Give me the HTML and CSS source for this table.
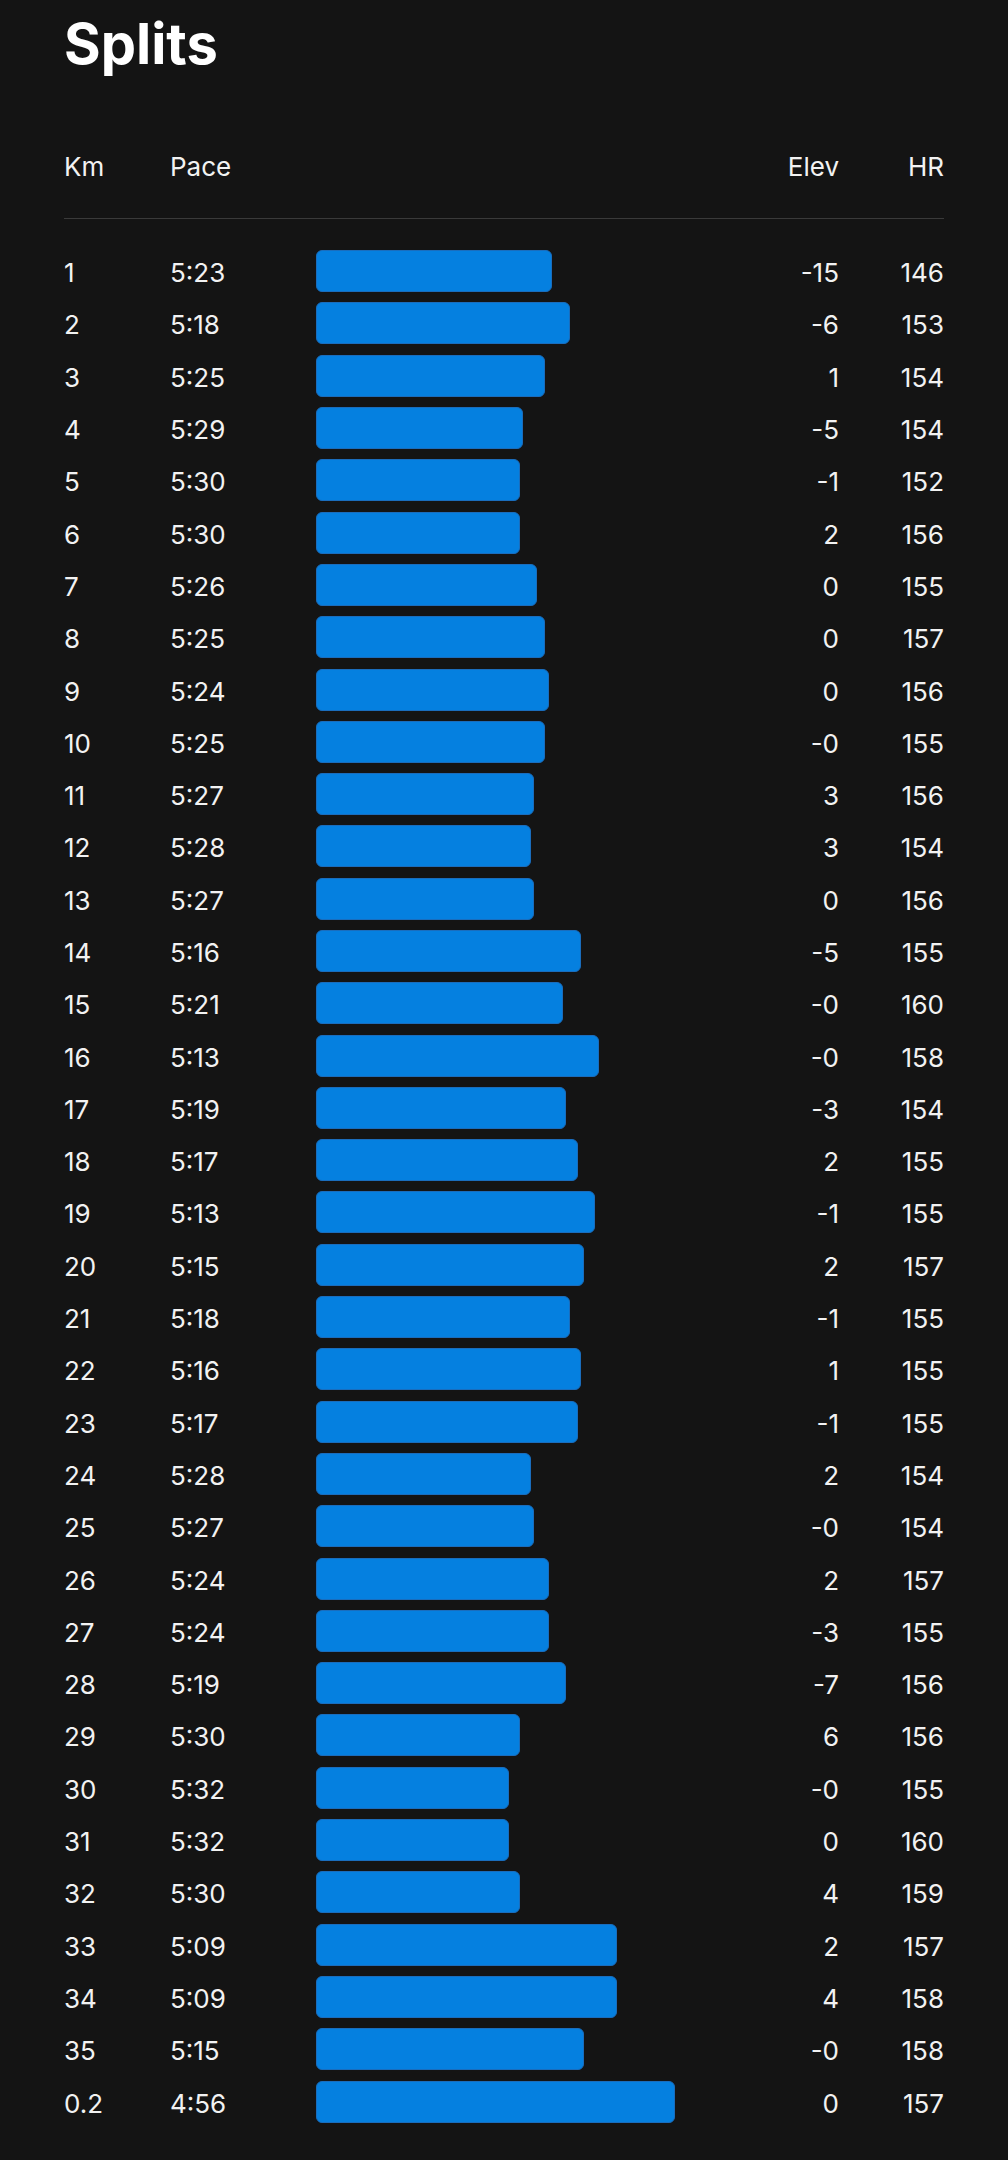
FILE: index.html
```html
<!DOCTYPE html>
<html lang="en">
<head>
    <meta charset="UTF-8">
    <meta name="viewport" content="width=device-width, initial-scale=1.0">
    <title>Splits</title>
    <link rel="stylesheet" href="styles.css">
</head>
<body>
    <div class="splits">
        <h1>Splits</h1>

        <div class="split-row split-head">
            <span>Km</span>
            <span>Pace</span>
            <span></span>
            <span class="num">Elev</span>
            <span class="num">HR</span>
        </div>

        <div class="split-list">
            <div class="split-row"><span>1</span><span>5:23</span><span class="track"><div class="bar" style="width:236px"></div></span><span class="num">-15</span><span class="num">146</span></div>
            <div class="split-row"><span>2</span><span>5:18</span><span class="track"><div class="bar" style="width:254px"></div></span><span class="num">-6</span><span class="num">153</span></div>
            <div class="split-row"><span>3</span><span>5:25</span><span class="track"><div class="bar" style="width:229px"></div></span><span class="num">1</span><span class="num">154</span></div>
            <div class="split-row"><span>4</span><span>5:29</span><span class="track"><div class="bar" style="width:207px"></div></span><span class="num">-5</span><span class="num">154</span></div>
            <div class="split-row"><span>5</span><span>5:30</span><span class="track"><div class="bar" style="width:204px"></div></span><span class="num">-1</span><span class="num">152</span></div>
            <div class="split-row"><span>6</span><span>5:30</span><span class="track"><div class="bar" style="width:204px"></div></span><span class="num">2</span><span class="num">156</span></div>
            <div class="split-row"><span>7</span><span>5:26</span><span class="track"><div class="bar" style="width:221px"></div></span><span class="num">0</span><span class="num">155</span></div>
            <div class="split-row"><span>8</span><span>5:25</span><span class="track"><div class="bar" style="width:229px"></div></span><span class="num">0</span><span class="num">157</span></div>
            <div class="split-row"><span>9</span><span>5:24</span><span class="track"><div class="bar" style="width:233px"></div></span><span class="num">0</span><span class="num">156</span></div>
            <div class="split-row"><span>10</span><span>5:25</span><span class="track"><div class="bar" style="width:229px"></div></span><span class="num">-0</span><span class="num">155</span></div>
            <div class="split-row"><span>11</span><span>5:27</span><span class="track"><div class="bar" style="width:218px"></div></span><span class="num">3</span><span class="num">156</span></div>
            <div class="split-row"><span>12</span><span>5:28</span><span class="track"><div class="bar" style="width:215px"></div></span><span class="num">3</span><span class="num">154</span></div>
            <div class="split-row"><span>13</span><span>5:27</span><span class="track"><div class="bar" style="width:218px"></div></span><span class="num">0</span><span class="num">156</span></div>
            <div class="split-row"><span>14</span><span>5:16</span><span class="track"><div class="bar" style="width:265px"></div></span><span class="num">-5</span><span class="num">155</span></div>
            <div class="split-row"><span>15</span><span>5:21</span><span class="track"><div class="bar" style="width:247px"></div></span><span class="num">-0</span><span class="num">160</span></div>
            <div class="split-row"><span>16</span><span>5:13</span><span class="track"><div class="bar" style="width:283px"></div></span><span class="num">-0</span><span class="num">158</span></div>
            <div class="split-row"><span>17</span><span>5:19</span><span class="track"><div class="bar" style="width:250px"></div></span><span class="num">-3</span><span class="num">154</span></div>
            <div class="split-row"><span>18</span><span>5:17</span><span class="track"><div class="bar" style="width:262px"></div></span><span class="num">2</span><span class="num">155</span></div>
            <div class="split-row"><span>19</span><span>5:13</span><span class="track"><div class="bar" style="width:279px"></div></span><span class="num">-1</span><span class="num">155</span></div>
            <div class="split-row"><span>20</span><span>5:15</span><span class="track"><div class="bar" style="width:268px"></div></span><span class="num">2</span><span class="num">157</span></div>
            <div class="split-row"><span>21</span><span>5:18</span><span class="track"><div class="bar" style="width:254px"></div></span><span class="num">-1</span><span class="num">155</span></div>
            <div class="split-row"><span>22</span><span>5:16</span><span class="track"><div class="bar" style="width:265px"></div></span><span class="num">1</span><span class="num">155</span></div>
            <div class="split-row"><span>23</span><span>5:17</span><span class="track"><div class="bar" style="width:262px"></div></span><span class="num">-1</span><span class="num">155</span></div>
            <div class="split-row"><span>24</span><span>5:28</span><span class="track"><div class="bar" style="width:215px"></div></span><span class="num">2</span><span class="num">154</span></div>
            <div class="split-row"><span>25</span><span>5:27</span><span class="track"><div class="bar" style="width:218px"></div></span><span class="num">-0</span><span class="num">154</span></div>
            <div class="split-row"><span>26</span><span>5:24</span><span class="track"><div class="bar" style="width:233px"></div></span><span class="num">2</span><span class="num">157</span></div>
            <div class="split-row"><span>27</span><span>5:24</span><span class="track"><div class="bar" style="width:233px"></div></span><span class="num">-3</span><span class="num">155</span></div>
            <div class="split-row"><span>28</span><span>5:19</span><span class="track"><div class="bar" style="width:250px"></div></span><span class="num">-7</span><span class="num">156</span></div>
            <div class="split-row"><span>29</span><span>5:30</span><span class="track"><div class="bar" style="width:204px"></div></span><span class="num">6</span><span class="num">156</span></div>
            <div class="split-row"><span>30</span><span>5:32</span><span class="track"><div class="bar" style="width:193px"></div></span><span class="num">-0</span><span class="num">155</span></div>
            <div class="split-row"><span>31</span><span>5:32</span><span class="track"><div class="bar" style="width:193px"></div></span><span class="num">0</span><span class="num">160</span></div>
            <div class="split-row"><span>32</span><span>5:30</span><span class="track"><div class="bar" style="width:204px"></div></span><span class="num">4</span><span class="num">159</span></div>
            <div class="split-row"><span>33</span><span>5:09</span><span class="track"><div class="bar" style="width:301px"></div></span><span class="num">2</span><span class="num">157</span></div>
            <div class="split-row"><span>34</span><span>5:09</span><span class="track"><div class="bar" style="width:301px"></div></span><span class="num">4</span><span class="num">158</span></div>
            <div class="split-row"><span>35</span><span>5:15</span><span class="track"><div class="bar" style="width:268px"></div></span><span class="num">-0</span><span class="num">158</span></div>
            <div class="split-row"><span>0.2</span><span>4:56</span><span class="track"><div class="bar" style="width:359px"></div></span><span class="num">0</span><span class="num">157</span></div>
        </div>
    </div>
</body>
</html>
```

FILE: styles.css
```css
body {
    margin: 0;
    background: #141414;
    color: #f2f2f2;
    font-family: Inter, "Noto Sans", sans-serif;
}
.splits {
    padding: 11px 64px 0 64px;
}
h1 {
    margin: 0;
    font-size: 56px;
    line-height: 67px;
    font-weight: 700;
    color: #fff;
}
.split-row {
    display: grid;
    grid-template-columns: 106px 146px 1fr 120px 105px;
    align-items: center;
    font-size: 26px;
    line-height: 30px;
    height: 52.3px;
}
.split-list .split-row span {
    padding-top: 4px;
}
.split-list .split-row .track {
    padding-top: 0;
}
.split-head {
    height: auto;
    margin-top: 74px;
    padding-bottom: 36px;
    border-bottom: 1px solid #3a3a3a;
}
.split-list {
    padding-top: 26px;
}
.num {
    text-align: right;
}
.bar {
    height: 42px;
    box-sizing: border-box;
    background: #0580e0;
    border: 1px solid #1a6dbd;
    border-radius: 6px;
}
```
